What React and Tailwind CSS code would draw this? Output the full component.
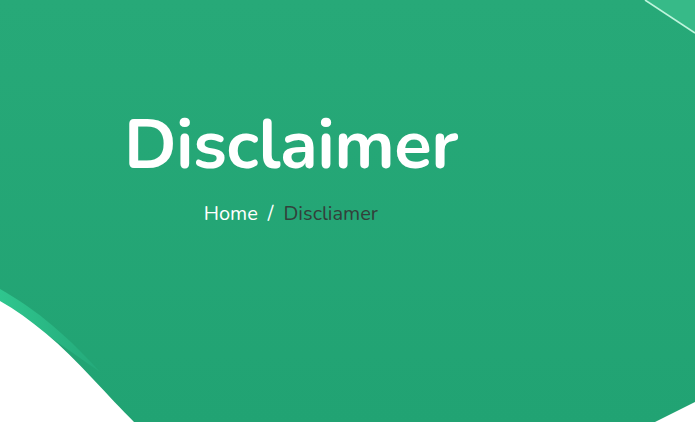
export default function App() {
  return (
    <div className="relative w-[695px] h-[422px] overflow-hidden bg-gradient-to-b from-[#27a978] to-[#21a373]">
      {/* decorative shapes */}
      <svg className="absolute inset-0" width="695" height="422" viewBox="0 0 695 422">
        <defs>
          <linearGradient id="sliver" x1="0" y1="0" x2="1" y2="0">
            <stop offset="0" stopColor="#2fc68e" />
            <stop offset="1" stopColor="#24a97a" />
          </linearGradient>
        </defs>
        <path d="M645 0 L695 33 L695 0 Z" fill="#37ba88" />
        <path d="M645 0 L695 33" stroke="#bff5dd" strokeWidth="1.6" />
        <path d="M0 289 C30 306 60 328 100 372 L0 302 Z" fill="url(#sliver)" />
        <path d="M0 301 C30 318 62 345 92 378 C108 395 122 410 134 422 L0 422 Z" fill="#ffffff" />
        <path d="M655 422 L695 402 L695 422 Z" fill="#ffffff" />
      </svg>

      <div className="relative pt-[100px] pl-[124px]">
        <div className="inline-flex flex-col items-center font-['Nunito','Noto_Sans',sans-serif]">
          <h1 className="text-[69px] leading-[90px] font-bold text-white tracking-[-0.5px]">Disclaimer</h1>
          <div className="mt-[12px] flex items-center gap-[10px] text-[20px] leading-6">
            <span className="text-white">Home</span>
            <span className="text-white">/</span>
            <span className="text-[#33403a]">Discliamer</span>
          </div>
        </div>
      </div>
    </div>
  );
}
